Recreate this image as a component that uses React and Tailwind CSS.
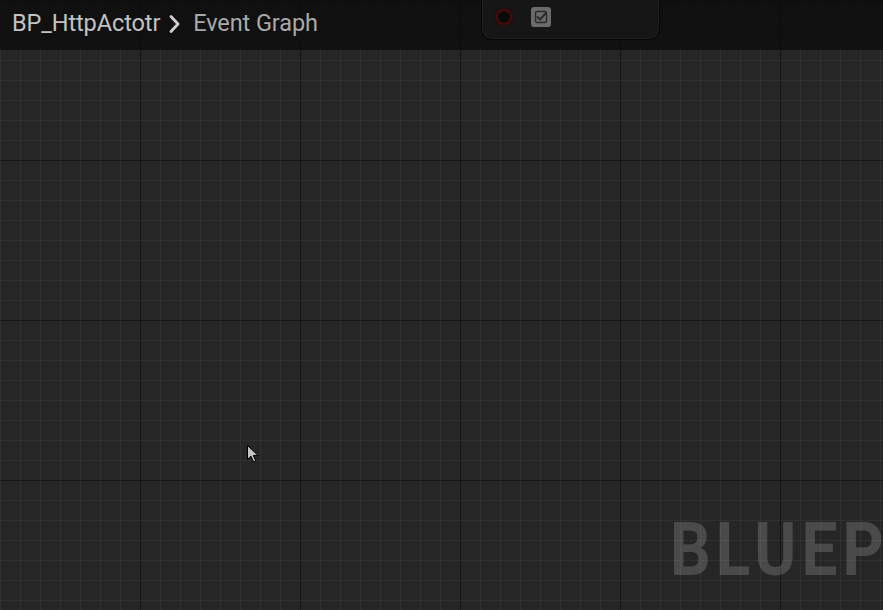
import React from 'react'

function Cursor() {
  return (
    <svg width="14" height="20" viewBox="0 0 14 20" className="absolute left-[246px] top-[444px]">
      <path d="M1.5 1.5 L1.5 15.5 L5 12.2 L7.6 18 L9.8 17 L7.3 11.4 L12 11.4 Z" fill="#c4c4c4" stroke="#000" strokeWidth="1" strokeLinejoin="round" />
    </svg>
  )
}

function Node() {
  return (
    <div className="absolute left-[481px] top-[-12px] w-[179px] h-[52px] rounded-[11px] border border-[#060606] bg-[#161616] shadow-[inset_0_0_0_1px_#1f1f1f] z-20">
      <div className="absolute left-[16px] top-[22px] w-[12px] h-[12px] rounded-full bg-[#0a0a0a] shadow-[0_0_0_2px_#4a0b0b,0_0_4px_2px_#3a0606]" />
      <div className="absolute left-[49px] top-[18px] w-[20px] h-[20px] rounded-[3px] bg-[#6b6b6b] flex items-center justify-center">
        <svg width="14" height="14" viewBox="0 0 14 14">
          <rect x="1.5" y="1.5" width="11" height="11" rx="1.5" fill="none" stroke="#2a2a2a" strokeWidth="1.4" />
          <path d="M3.5 7 L6 9.5 L11.5 3.5" fill="none" stroke="#2a2a2a" strokeWidth="2" strokeLinecap="round" strokeLinejoin="round" />
        </svg>
      </div>
    </div>
  )
}

export default function App() {
  return (
    <div className="relative w-[883px] h-[610px] overflow-hidden bg-[#262626] bg-[linear-gradient(to_right,#151515_1px,transparent_1px),linear-gradient(to_bottom,#151515_1px,transparent_1px),linear-gradient(to_right,#303030_1px,transparent_1px),linear-gradient(to_bottom,#303030_1px,transparent_1px)] bg-[size:160px_160px,160px_160px,20px_20px,20px_20px] bg-[position:140px_0,0_0,0_0,0_0] font-['Roboto',sans-serif]">
      <header className="relative z-10 h-[50px] bg-[rgba(12,12,12,0.82)] flex items-center pl-[12px] pb-[2px]">
        <span className="text-[23.5px] text-[#c2c2c2] tracking-[-0.1px]">BP_HttpActotr</span>
        <svg width="14" height="20" viewBox="0 0 14 20" className="ml-[8px] mr-[11px]">
          <path d="M3 2.5 L10 10 L3 17.5" fill="none" stroke="#d0d0d0" strokeWidth="2.8" strokeLinecap="round" strokeLinejoin="round" />
        </svg>
        <span className="text-[23.5px] text-[#a9a9a9] tracking-[-0.1px]">Event Graph</span>
      </header>
      <Node />
      <Cursor />
      <div className="absolute left-[670px] top-[512px] origin-left scale-x-[0.85] text-[75px] font-bold leading-none text-white/[0.17] whitespace-nowrap tracking-[6px]">
        BLUEPRINT
      </div>
    </div>
  )
}
